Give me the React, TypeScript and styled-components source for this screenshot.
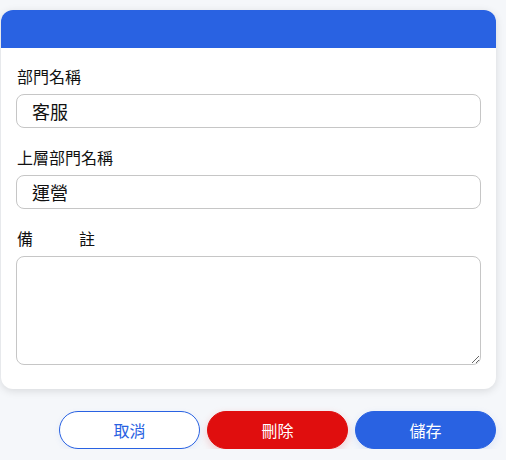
import React from 'react';
import styled, { createGlobalStyle } from 'styled-components';

const GlobalStyle = createGlobalStyle`
  html, body {
    margin: 0;
    padding: 0;
    background: #f5f7fa;
  }
  body {
    font-family: Roboto, "Noto Sans CJK TC", "Noto Sans", sans-serif;
    color: #111;
  }
`;

const Page = styled.div`
  padding: 10px 10px 0 1px;
`;

const Card = styled.div`
  width: 495px;
  background: #fff;
  border-radius: 12px;
  box-shadow: 0 2px 8px rgba(0, 0, 0, 0.12);
  overflow: hidden;
`;

const Header = styled.div`
  height: 38px;
  background: #2962e2;
`;

const Body = styled.div`
  padding: 18px 15px 24px 15px;
`;

const Field = styled.div`
  & + & {
    margin-top: 19px;
  }
`;

const Label = styled.label<{ $spread?: boolean }>`
  display: block;
  font-size: 16px;
  line-height: 24px;
  margin-bottom: 4px;
  padding-left: 1px;
  ${({ $spread }) =>
    $spread &&
    `
    width: 78px;
    text-align: justify;
    text-align-last: justify;
  `}
`;

const TextInput = styled.input`
  box-sizing: border-box;
  display: block;
  width: 465px;
  height: 34px;
  border: 1px solid #c6c6c6;
  border-radius: 8px;
  padding: 0 15px;
  font-family: inherit;
  font-size: 18px;
  color: #111;
  background: #fff;
  outline: none;
`;

const Note = styled.textarea`
  box-sizing: border-box;
  display: block;
  width: 465px;
  height: 109px;
  border: 1px solid #c6c6c6;
  border-radius: 8px;
  padding: 8px 15px;
  font-family: inherit;
  font-size: 16px;
  background: #fff;
  outline: none;
`;

const Actions = styled.div`
  width: 495px;
  display: flex;
  justify-content: flex-end;
  gap: 7px;
  margin-top: 22px;
`;

const variants = {
  outline: 'background: #fff; color: #2962e2; border: 1px solid #2962e2; box-shadow: 0 2px 6px rgba(41, 98, 226, 0.08);',
  danger: 'background: #e00e0e; color: #fff; border: 1px solid #e00e0e; box-shadow: 0 3px 8px rgba(224, 14, 14, 0.18);',
  primary: 'background: #2962e2; color: #fff; border: 1px solid #2962e2; box-shadow: 0 3px 8px rgba(41, 98, 226, 0.12);',
};

const Button = styled.button<{ $variant: keyof typeof variants }>`
  box-sizing: border-box;
  width: 141px;
  height: 38px;
  border-radius: 19px;
  font-family: inherit;
  font-size: 16px;
  font-weight: 400;
  cursor: pointer;
  ${({ $variant }) => variants[$variant]}
`;

export default function App() {
  return (
    <>
      <GlobalStyle />
      <Page>
        <Card>
          <Header />
          <Body>
            <Field>
              <Label>部門名稱</Label>
              <TextInput defaultValue="客服" />
            </Field>
            <Field>
              <Label>上層部門名稱</Label>
              <TextInput defaultValue="運營" />
            </Field>
            <Field>
              <Label $spread>備註</Label>
              <Note />
            </Field>
          </Body>
        </Card>
        <Actions>
          <Button $variant="outline">取消</Button>
          <Button $variant="danger">刪除</Button>
          <Button $variant="primary">儲存</Button>
        </Actions>
      </Page>
    </>
  );
}
